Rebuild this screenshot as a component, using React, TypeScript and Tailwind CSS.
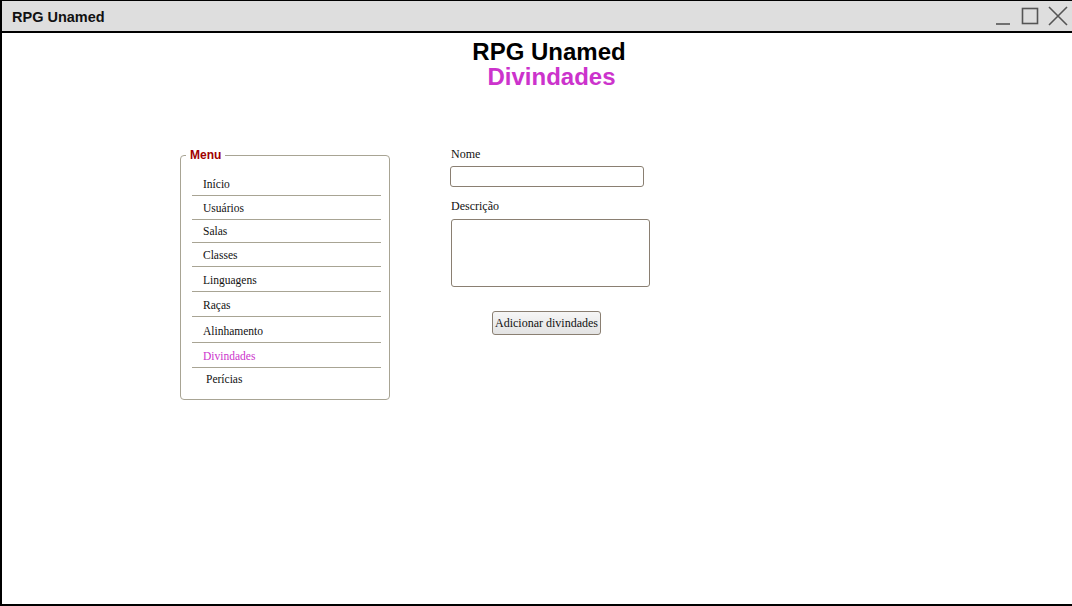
import React from "react";

const menuItems = [
  { label: "Início", h: 36, pl: 22, active: false },
  { label: "Usuários", h: 24, pl: 22, active: false },
  { label: "Salas", h: 23, pl: 22, active: false },
  { label: "Classes", h: 24, pl: 22, active: false },
  { label: "Linguagens", h: 25, pl: 22, active: false },
  { label: "Raças", h: 25, pl: 22, active: false },
  { label: "Alinhamento", h: 26, pl: 22, active: false },
  { label: "Divindades", h: 25, pl: 22, active: true },
  { label: "Perícias", h: 23, pl: 25, active: false },
];

function TitleBar() {
  return (
    <div className="flex h-[30px] items-center justify-between bg-[#dedede] pl-[10px] pr-[4px]">
      <span className="pt-[3px] font-['Liberation_Sans',Arial,sans-serif] text-[14.5px] font-bold text-[#111]">
        RPG Unamed
      </span>
      <div className="flex items-center gap-[9px] text-[#555]">
        <svg width="18" height="20" viewBox="0 0 18 20">
          <line x1="2" y1="18" x2="16" y2="18" stroke="currentColor" strokeWidth="1.6" />
        </svg>
        <svg width="18" height="20" viewBox="0 0 18 20">
          <rect x="1.5" y="2.5" width="15" height="15" fill="none" stroke="currentColor" strokeWidth="1.6" />
        </svg>
        <svg width="20" height="20" viewBox="0 0 20 20">
          <path d="M1 1 L19 19 M19 1 L1 19" stroke="currentColor" strokeWidth="1.6" />
        </svg>
      </div>
    </div>
  );
}

function Menu() {
  return (
    <fieldset className="w-[210px] rounded-[4px] border border-[#a8a494] pl-[11px] pr-[8px] pb-[8px] pt-0">
      <legend className="ml-[-6px] px-[4px] font-['Liberation_Sans',Arial,sans-serif] text-[12px] font-bold text-[#a00000]">
        Menu
      </legend>
      <ul className="mt-[-4px] font-['Liberation_Serif','Times_New_Roman',serif] text-[11.5px]">
        {menuItems.map((item, i) => (
          <li
            key={item.label}
            className={
              "flex items-center " +
              (i < menuItems.length - 1 ? "border-b border-[#a8a494] " : "") +
              (item.active ? "text-[#cc33cc]" : "text-[#111]")
            }
            style={{ height: item.h, paddingTop: item.h - 22, paddingLeft: item.pl - 11 }}
          >
            {item.label}
          </li>
        ))}
      </ul>
    </fieldset>
  );
}

function Form() {
  return (
    <div className="flex flex-col font-['Liberation_Serif','Times_New_Roman',serif] text-[12px] text-[#111]">
      <label className="leading-[14px]">Nome</label>
      <input className="ml-[-1px] mt-[5px] h-[21px] w-[194px] rounded-[3px] border border-[#8a7f72] bg-white" />
      <label className="mt-[12px] leading-[14px]">Descrição</label>
      <textarea className="mt-[6px] h-[68px] w-[199px] resize-none rounded-[3px] border border-[#8a7f72] bg-white" />
      <div className="ml-[41px] mt-[24px]">
        <button className="h-[24px] rounded-[3px] border border-[#8a7f72] bg-gradient-to-b from-[#f6f6f6] to-[#e3e3e3] px-[2px] text-[12px] text-[#111]">
          Adicionar divindades
        </button>
      </div>
    </div>
  );
}

export default function App() {
  return (
    <div className="flex h-[606px] w-[1072px] flex-col border-b-2 border-l-2 border-t border-black bg-white">
      <TitleBar />
      <div className="h-[2px] bg-black" />
      <div className="flex flex-1 flex-col">
        <div className="flex flex-col items-center pl-[24px] pt-[6px] font-['Liberation_Sans',Arial,sans-serif] text-[24px] font-bold leading-[25px]">
          <h1 className="text-black">RPG Unamed</h1>
          <h2 className="pl-[5px] text-[#cc33cc]">Divindades</h2>
        </div>
        <div className="mt-[57px] flex pl-[178px]">
          <Menu />
          <div className="ml-[61px] mt-[1px]">
            <Form />
          </div>
        </div>
      </div>
    </div>
  );
}
